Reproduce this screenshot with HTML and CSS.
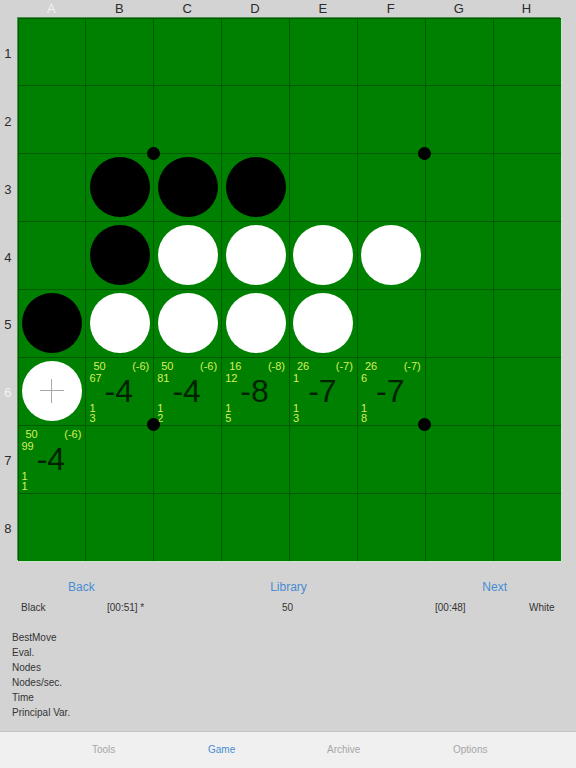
FILE: index.html
```html
<!DOCTYPE html>
<html lang="en">
<head>
<meta charset="utf-8">
<title>Reversi</title>
<link rel="stylesheet" href="styles.css">
</head>
<body>
<main class="app">
  <section class="game">
    <div class="cols">
      <span class="col light">A</span><span class="col">B</span><span class="col">C</span><span class="col">D</span><span class="col">E</span><span class="col">F</span><span class="col">G</span><span class="col">H</span>
    </div>
    <div class="board-row">
      <div class="rows">
        <span class="row">1</span><span class="row">2</span><span class="row">3</span><span class="row">4</span><span class="row">5</span><span class="row light">6</span><span class="row">7</span><span class="row">8</span>
      </div>
      <div class="board">
        <div class="cell"></div><div class="cell"></div><div class="cell"></div><div class="cell"></div><div class="cell"></div><div class="cell"></div><div class="cell"></div><div class="cell"></div>
        <div class="cell"></div><div class="cell"></div><div class="cell"></div><div class="cell"></div><div class="cell"></div><div class="cell"></div><div class="cell"></div><div class="cell"></div>
        <div class="cell"></div><div class="cell"><i class="disc black"></i></div><div class="cell"><i class="disc black"></i></div><div class="cell"><i class="disc black"></i></div><div class="cell"></div><div class="cell"></div><div class="cell"></div><div class="cell"></div>
        <div class="cell"></div><div class="cell"><i class="disc black"></i></div><div class="cell"><i class="disc white"></i></div><div class="cell"><i class="disc white"></i></div><div class="cell"><i class="disc white"></i></div><div class="cell"><i class="disc white"></i></div><div class="cell"></div><div class="cell"></div>
        <div class="cell"><i class="disc black"></i></div><div class="cell"><i class="disc white"></i></div><div class="cell"><i class="disc white"></i></div><div class="cell"><i class="disc white"></i></div><div class="cell"><i class="disc white"></i></div><div class="cell"></div><div class="cell"></div><div class="cell"></div>
        <div class="cell"><i class="disc white cross"></i></div>
        <div class="cell hint"><div class="info"><div class="top"><span>50</span><span>(-6)</span></div><div>67</div><div class="depth">1<br>3</div></div><div class="big">-4</div></div>
        <div class="cell hint"><div class="info"><div class="top"><span>50</span><span>(-6)</span></div><div>81</div><div class="depth">1<br>2</div></div><div class="big">-4</div></div>
        <div class="cell hint"><div class="info"><div class="top"><span>16</span><span>(-8)</span></div><div>12</div><div class="depth">1<br>5</div></div><div class="big">-8</div></div>
        <div class="cell hint"><div class="info"><div class="top"><span>26</span><span>(-7)</span></div><div>1</div><div class="depth">1<br>3</div></div><div class="big">-7</div></div>
        <div class="cell hint"><div class="info"><div class="top"><span>26</span><span>(-7)</span></div><div>6</div><div class="depth">1<br>8</div></div><div class="big">-7</div></div>
        <div class="cell"></div><div class="cell"></div>
        <div class="cell hint"><div class="info"><div class="top"><span>50</span><span>(-6)</span></div><div>99</div><div class="depth">1<br>1</div></div><div class="big">-4</div></div>
        <div class="cell"></div><div class="cell"></div><div class="cell"></div><div class="cell"></div><div class="cell"></div><div class="cell"></div><div class="cell"></div>
        <div class="cell"></div><div class="cell"></div><div class="cell"></div><div class="cell"></div><div class="cell"></div><div class="cell"></div><div class="cell"></div><div class="cell"></div>
        <i class="star s1"></i><i class="star s2"></i><i class="star s3"></i><i class="star s4"></i>
      </div>
    </div>
    <nav class="nav"><a>Back</a><a>Library</a><a>Next</a></nav>
    <div class="status"><span>Black</span><span>[00:51] *</span><span>50</span><span>[00:48]</span><span>White</span></div>
    <div class="stats">
      <div>BestMove</div><div>Eval.</div><div>Nodes</div><div>Nodes/sec.</div><div>Time</div><div>Principal Var.</div>
    </div>
  </section>
  <footer class="tabs"><span>Tools</span><span class="active">Game</span><span>Archive</span><span>Options</span></footer>
</main>
</body>
</html>
```
FILE: styles.css
```css
* { box-sizing: border-box; }
html, body { margin: 0; padding: 0; }
body { width: 576px; height: 768px; overflow: hidden; background: #d3d3d3; font-family: "Liberation Sans", Arial, sans-serif; color: #333; }
.app { display: flex; flex-direction: column; height: 768px; }
.game { flex: 1; min-height: 0; }
.cols { display: grid; grid-template-columns: repeat(8, 67.875px); height: 17.5px; margin-left: 17.5px; }
.col { font-size: 13px; line-height: 17px; text-align: center; color: #2b2b2b; }
.board-row { display: flex; }
.rows { width: 17.5px; height: 543px; display: grid; grid-template-rows: repeat(8, 67.875px); }
.row { display: flex; align-items: center; justify-content: center; padding: 4px 2px 0 0; font-size: 13px; color: #2b2b2b; }
.light { color: #f2f2f2; }
.board { position: relative; width: 543px; height: 543px; display: grid; grid-template-columns: repeat(8, minmax(0, 1fr)); grid-template-rows: repeat(8, minmax(0, 1fr)); background: #008000; box-shadow: 1px 1px 0 #c8e6c8, -1px -1px 0 #4f8f4f; }
.cell { display: flex; align-items: center; justify-content: center; border-left: 1px solid #005a00; border-top: 1px solid #005a00; min-width: 0; min-height: 0; }
.disc { display: block; flex: none; width: 60px; height: 60px; margin-top: -1px; border-radius: 50%; }
.black { background: #000; }
.white { background: #fff; }
.cross { position: relative; }
.cross::before, .cross::after { content: ""; position: absolute; background: #a8a8a8; }
.cross::before { left: 18px; top: 29.5px; width: 24px; height: 1px; }
.cross::after { left: 29.5px; top: 18px; width: 1px; height: 24px; }
.hint { display: grid; grid-template: minmax(0, 1fr) / minmax(0, 1fr); align-items: stretch; justify-content: stretch; color: #d8ee5e; font-size: 11px; line-height: 11px; }
.info { grid-area: 1 / 1; display: flex; flex-direction: column; padding: 3px 4px 2px 3px; }
.top { display: flex; justify-content: space-between; padding-left: 4px; margin-bottom: 1px; }
.depth { margin-top: auto; line-height: 10px; }
.big { grid-area: 1 / 1; place-self: center; margin: -1px 0 0 -2px; font-size: 32px; line-height: 1; color: #002200; }
.star { position: absolute; width: 13px; height: 13px; margin: -6.5px 0 0 -6.5px; border-radius: 50%; background: #000; }
.s1 { left: 25%; top: 25%; }
.s2 { left: 75%; top: 25%; }
.s3 { left: 25%; top: 75%; }
.s4 { left: 75%; top: 75%; }
.nav { display: flex; justify-content: space-between; padding: 19.5px 69px 0 68px; font-size: 12px; line-height: 14px; color: #4a8cd2; }
.status { display: grid; grid-template-columns: 86px 175px 153px 94px auto; padding: 7px 0 0 21px; font-size: 10px; line-height: 14px; }
.stats { padding: 15px 0 0 12px; font-size: 10px; line-height: 15px; }
.tabs { flex: none; height: 37px; display: grid; grid-template-columns: 116px 119px 126px auto; padding: 0 0 2px 92px; align-items: center; background: #f0f0f0; border-top: 1px solid #c4c4c4; font-size: 10px; color: #a6a6a6; }
.tabs .active { color: #4a8cd2; }
```
